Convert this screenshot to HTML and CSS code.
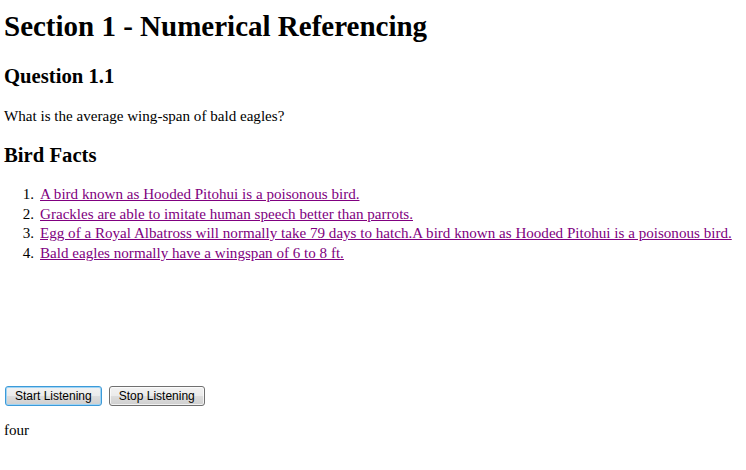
FILE: index.html
```html
<!DOCTYPE html>
<html>
<head>
<meta charset="utf-8">
<link rel="stylesheet" href="styles.css">
</head>
<body>
<h1 class="title">Section 1 - Numerical Referencing</h1>
<h2 class="sub">Question 1.1</h2>
<p class="question">What is the average wing-span of bald eagles?</p>
<h2 class="sub facts">Bird Facts</h2>
<ol class="list">
<li><a href="#">A bird known as Hooded Pitohui is a poisonous bird.</a></li>
<li><a href="#">Grackles are able to imitate human speech better than parrots.</a></li>
<li><a href="#">Egg of a Royal Albatross will normally take 79 days to hatch.A bird known as Hooded Pitohui is a poisonous bird.</a></li>
<li><a href="#">Bald eagles normally have a wingspan of 6 to 8 ft.</a></li>
</ol>
<div class="controls">
<button class="btn focus">Start Listening</button>
<button class="btn">Stop Listening</button>
</div>
<div class="result">four</div>
</body>
</html>
```
FILE: styles.css
```css
html, body { background: #fff; }
body {
  margin: 0;
  padding: 0 4px;
  font-family: "Liberation Serif", "Times New Roman", serif;
  font-size: 15.1px;
  line-height: 19px;
  color: #000;
}
.title {
  font-size: 29px;
  font-weight: bold;
  line-height: 33px;
  margin: 10px 0 0 0;
}
.sub {
  font-size: 20.7px;
  font-weight: bold;
  line-height: 23px;
  margin: 22px 0 0 0;
}
.question {
  margin: 19px 0 0 0;
}
.facts { margin-top: 18px; }
.list {
  margin: 18px 0 0 0;
  padding: 0;
  list-style: none;
  counter-reset: item;
}
.list li {
  line-height: 19.6px;
  display: flex;
  counter-increment: item;
  white-space: nowrap;
}
.list li::before {
  content: counter(item) ".";
  width: 30px;
  text-align: right;
  padding-right: 6px;
  flex: none;
}
.list a { color: #800080; text-decoration: underline; }
.controls {
  margin-top: 123px;
  display: flex;
  gap: 7px;
  padding-left: 1px;
}
.btn {
  font-family: "Liberation Sans", Arial, sans-serif;
  font-size: 12px;
  height: 20px;
  padding: 0 9px;
  border: 1px solid #707070;
  border-radius: 3px;
  background: linear-gradient(#f2f2f2 0%, #ebebeb 50%, #dddddd 51%, #cfcfcf 100%);
  box-shadow: inset 0 0 0 1px rgba(255,255,255,0.7);
  color: #000;
}
.btn.focus {
  border-color: #3c9ad8;
  box-shadow: inset 0 0 0 1px #9fd4f5;
}
.result { margin-top: 15px; }
```
